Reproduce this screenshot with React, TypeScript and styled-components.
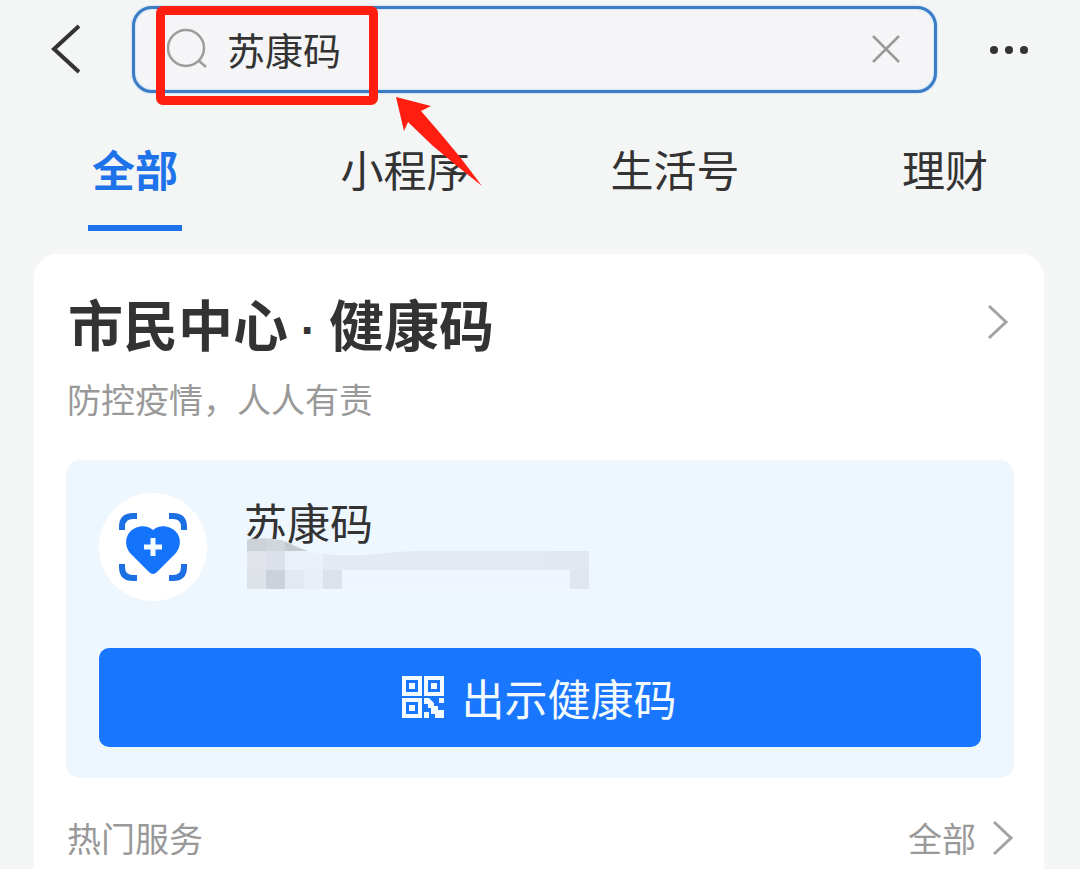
import React, { useState } from "react";
import styled, { createGlobalStyle } from "styled-components";

const GlobalStyle = createGlobalStyle`
  * { box-sizing: border-box; }
  body {
    margin: 0;
    background: #f4f5f5;
    color: #333;
    font-family: "Noto Sans CJK SC", sans-serif;
  }
  button, input { font: inherit; color: inherit; }
  button { border: 0; padding: 0; background: none; cursor: pointer; }
  svg { display: block; flex: none; }
`;

const Screen = styled.main`
  display: flex;
  flex-direction: column;
  min-height: 100vh;
  overflow-x: hidden;
`;

const Header = styled.header`
  display: flex;
  align-items: center;
  padding: 6px 48px 0;
`;

const IconButton = styled.button`
  display: flex;
  align-items: center;
  justify-content: center;
`;

const SearchBox = styled.form`
  position: relative;
  flex: 1;
  min-width: 0;
  display: flex;
  align-items: center;
  height: 87px;
  margin: 0 48px;
  padding: 0 33px 2px 32px;
  border: 3px solid #3b7cc4;
  border-radius: 20px;
  background: #f5f5f7;
  box-shadow: 0 0 2px #8cc8fa, inset 0 0 2px #8cc8fa;
`;

const SearchInput = styled.input`
  flex: 1;
  min-width: 0;
  margin-left: 18px;
  padding: 0;
  border: 0;
  outline: 0;
  background: none;
  font-size: 38px;
  line-height: 56px;
`;

const Highlight = styled.div`
  position: absolute;
  top: -3px;
  left: 21px;
  width: 222px;
  height: 99px;
  border: 9px solid #ff1e10;
  border-radius: 7px;
  pointer-events: none;
`;

const Pointer = styled.svg`
  position: absolute;
  z-index: 1;
  top: 87px;
  left: 260px;
  pointer-events: none;
`;

const Tabs = styled.nav`
  display: grid;
  grid-template-columns: repeat(4, 1fr);
  justify-items: center;
  margin-top: 44px;
`;

const Tab = styled.button<{ $active: boolean }>`
  height: 94px;
  padding: 0 4px 26px;
  font-size: 43px;
  line-height: 62px;
  border-bottom: 6px solid ${(p) => (p.$active ? "#1f73ea" : "transparent")};
  color: ${(p) => (p.$active ? "#1f73ea" : "#333")};
  font-weight: ${(p) => (p.$active ? 700 : 400)};
`;

const Card = styled.section`
  flex: 1;
  margin: 23px 36px 0 34px;
  padding: 31px 30px 6px 32px;
  border-radius: 24px 24px 0 0;
  background: #fff;
  box-shadow: 0 0 4px #fafafa;
`;

const TitleRow = styled.div`
  display: flex;
  align-items: center;
  justify-content: space-between;
  padding: 0 5px 0 2px;
`;

const Title = styled.h1`
  margin: 0;
  font-size: 55px;
  line-height: 74px;
  font-weight: 700;
`;

const Dot = styled.span`
  font-family: "Liberation Sans", sans-serif;
  font-size: 46px;
  line-height: 1;
`;

const Muted = styled.p`
  margin: 0;
  font-size: 34px;
  line-height: 48px;
  color: #999;
`;

const Slogan = styled(Muted)`
  margin-top: 16px;
  padding-left: 1px;
`;

const Panel = styled.div`
  margin-top: 37px;
  padding: 33px 33px 31px;
  border-radius: 14px;
  background: #eff7fe;
`;

const Service = styled.div`
  display: flex;
  align-items: flex-start;
`;

const Badge = styled.div`
  display: flex;
  align-items: center;
  justify-content: center;
  width: 108px;
  height: 108px;
  border-radius: 50%;
  background: #fff;
`;

const ServiceInfo = styled.div`
  position: relative;
  margin-left: 37px;
`;

const ServiceName = styled.h2`
  margin: 0;
  font-size: 43px;
  line-height: 56px;
  font-weight: 400;
`;

const Redaction = styled.svg`
  position: absolute;
  top: 45px;
  left: 3px;
`;

const PrimaryButton = styled.button`
  display: flex;
  align-items: center;
  justify-content: center;
  gap: 18px;
  width: 100%;
  height: 99px;
  margin-top: 47px;
  padding: 0 2px 2px 0;
  border-radius: 10px;
  background: #1976fe;
  color: #f4fbff;
  font-size: 43px;
  line-height: 64px;
`;

const FooterRow = styled.div`
  display: flex;
  align-items: center;
  justify-content: space-between;
  margin-top: 36px;
  padding-left: 1px;
`;

const MoreLink = styled.a`
  display: flex;
  align-items: center;
  gap: 16px;
  font-size: 34px;
  line-height: 48px;
  color: #999;
  text-decoration: none;
`;

const Chevron = () => (
  <svg width="22" height="36" viewBox="0 0 22 36" fill="none" stroke="#a3a3a3" strokeWidth="3" aria-hidden="true">
    <path d="M2 2 19 18 2 34" />
  </svg>
);

const HealthIcon = () => (
  <svg width="70" height="70" viewBox="0 0 70 70" fill="none" aria-hidden="true">
    <g stroke="#1d70e4" strokeWidth="6">
      <path d="M4 18v-3Q4 4 15 4h4M51 4h4q11 0 11 11v3M66 52v3q0 11-11 11h-4M19 66h-4Q4 66 4 55v-3" />
    </g>
    <path
      d="M35 18C29 12 17 13 11 21C6 28 8 37 13 42L31 60Q35 64 39 60L57 42C62 37 64 28 59 21C53 13 41 12 35 18Z"
      fill="#1473fb"
    />
    <path d="M35 26v18M26 35h18" stroke="#f4fbff" strokeWidth="5" />
  </svg>
);

const QrIcon = () => (
  <svg width="42" height="42" viewBox="0 0 42 42" fill="#f4fbff" aria-hidden="true">
    <path
      fillRule="evenodd"
      d="M0 0h20v20H0zM4 4v12h12V4zM22 0h20v20H22zM26 4v12h12V4zM0 22h20v20H0zM4 26v12h12V26z"
    />
    <path d="M7 7h6v6H7zM29 7h6v6h-6zM7 29h6v6H7zM22 22h5l5 5v3h4v4h6v8h-9v-4h-4v-6h-3v-4h-4zM37 22h5v5h-5zM22 36h5v6h-5z" />
  </svg>
);

const mosaic: [number, number, number, number, string][] = [
  [0, 13, 19, 19, "#e1e5eb"],
  [19, 13, 19, 19, "#dce0e8"],
  [38, 13, 38, 19, "#ebf0f9"],
  [76, 13, 76, 19, "#e5eaf2"],
  [152, 13, 76, 19, "#e4e9f1"],
  [228, 13, 76, 19, "#e3e9f1"],
  [304, 13, 38, 19, "#e2e8ef"],
  [0, 32, 19, 19, "#dee3ea"],
  [19, 32, 19, 19, "#cdd1da"],
  [38, 32, 19, 19, "#e4e8f0"],
  [57, 32, 19, 19, "#e9eef8"],
  [76, 32, 19, 19, "#dde2ea"],
  [95, 32, 228, 19, "#eff4fd"],
  [323, 32, 19, 19, "#e1e5ee"],
];

const Mosaic = () => (
  <Redaction width="342" height="51" viewBox="0 0 342 51" shapeRendering="crispEdges" aria-hidden="true">
    <defs>
      <clipPath id="smear">
        <path d="M0 2Q12-1 28 1C44 3 50 13 76 16C110 20 140 14 166 13H342V51H0Z" />
      </clipPath>
    </defs>
    <g clipPath="url(#smear)">
      <path d="M0 0h19v13H0z" fill="#cdd2d9" />
      <path d="M19 0h19v13H19z" fill="#d2d6dd" />
      <path d="M38 0h30v13H38z" fill="#c5cad1" />
      {mosaic.map(([x, y, w, h, fill]) => (
        <rect key={`${x}-${y}`} x={x} y={y} width={w} height={h} fill={fill} />
      ))}
    </g>
  </Redaction>
);

const tabs = ["全部", "小程序", "生活号", "理财"];

export default function App() {
  const [query, setQuery] = useState("苏康码");
  const [active, setActive] = useState(tabs[0]);

  return (
    <Screen>
      <GlobalStyle />
      <Header>
        <IconButton aria-label="返回">
          <svg width="36" height="52" viewBox="0 0 36 52" fill="none" stroke="#333" strokeWidth="4">
            <path d="M31 2 6 25 31 48" />
          </svg>
        </IconButton>
        <SearchBox role="search" onSubmit={(e) => e.preventDefault()}>
          <svg width="42" height="42" viewBox="0 0 42 42" fill="none" stroke="#9c9c9c" strokeWidth="2.5" aria-hidden="true">
            <circle cx="19" cy="20" r="18" />
            <path d="m31 32 8 7" />
          </svg>
          <SearchInput aria-label="搜索" value={query} onChange={(e) => setQuery(e.target.value)} />
          <IconButton type="button" aria-label="清除" onClick={() => setQuery("")}>
            <svg width="30" height="30" viewBox="0 0 30 30" fill="none" stroke="#999" strokeWidth="2.5">
              <path d="m2 2 26 26M28 2 2 28" />
            </svg>
          </IconButton>
          <Highlight />
          <Pointer width="90" height="92" viewBox="0 0 90 92" aria-hidden="true">
            <path d="M1 1 36 10 26 15 45 37 65 61 87 90 62 70 38 50 13 26 9 35Z" fill="#ff1e10" />
          </Pointer>
        </SearchBox>
        <IconButton aria-label="更多">
          <svg width="47" height="10" viewBox="0 0 47 10" fill="#333">
            <circle cx="9" cy="5" r="4" />
            <circle cx="24" cy="5" r="4" />
            <circle cx="39" cy="5" r="4" />
          </svg>
        </IconButton>
      </Header>

      <Tabs>
        {tabs.map((name) => (
          <Tab key={name} $active={name === active} onClick={() => setActive(name)}>
            {name}
          </Tab>
        ))}
      </Tabs>

      <Card>
        <TitleRow>
          <Title>
            市民中心<Dot> · </Dot>健康码
          </Title>
          <IconButton aria-label="进入市民中心">
            <Chevron />
          </IconButton>
        </TitleRow>
        <Slogan>防控疫情，人人有责</Slogan>

        <Panel>
          <Service>
            <Badge>
              <HealthIcon />
            </Badge>
            <ServiceInfo>
              <ServiceName>苏康码</ServiceName>
              <Mosaic />
            </ServiceInfo>
          </Service>
          <PrimaryButton>
            <QrIcon />
            出示健康码
          </PrimaryButton>
        </Panel>

        <FooterRow>
          <Muted>热门服务</Muted>
          <MoreLink href="#services">
            全部
            <Chevron />
          </MoreLink>
        </FooterRow>
      </Card>
    </Screen>
  );
}
